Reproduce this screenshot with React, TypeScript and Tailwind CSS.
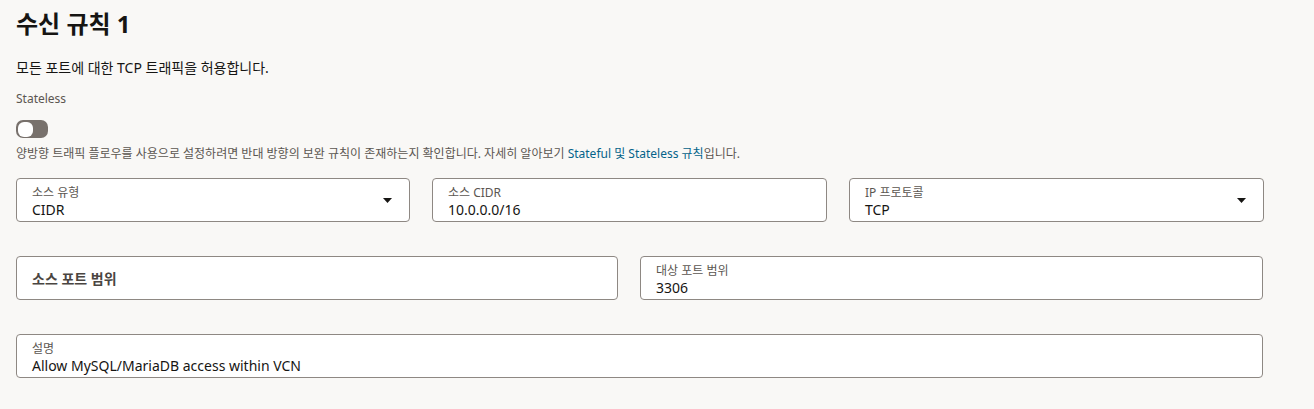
import React from "react";

const font = { fontFamily: '"Noto Sans", "Noto Sans CJK KR", sans-serif' };

function Caret() {
  return (
    <svg width="9" height="5" viewBox="0 0 9 5" className="shrink-0">
      <path d="M0 0h9L4.5 5z" fill="#161513" />
    </svg>
  );
}

function Field({ label, value, select }: { label: string; value: string; select?: boolean }) {
  return (
    <div className="flex h-[44px] items-start rounded-[4px] border border-[#8e8883] bg-white pl-[15px] pr-[17px]">
      <div className="flex min-w-0 flex-1 flex-col pt-[6px]">
        <span className="text-[12px] leading-[16px] text-[#5b5651]">{label}</span>
        <span className="text-[14px] leading-[18px] text-[#161513]">{value}</span>
      </div>
      {select && (
        <div className="flex h-full items-center">
          <Caret />
        </div>
      )}
    </div>
  );
}

export default function App() {
  return (
    <div className="min-h-screen bg-[#f9f8f6] px-4 pt-2 text-[#161513]" style={font}>
      {/* header */}
      <h1 className="text-[24px] font-bold leading-[32px]">수신 규칙 1</h1>
      <p className="mt-[18px] text-[14px] leading-[20px]">모든 포트에 대한 TCP 트래픽을 허용합니다.</p>

      <div className="mt-[13px] text-[12px] leading-[16px] text-[#5b5651]">Stateless</div>
      <div className="mt-[13px] flex h-[18px] w-[32px] items-center rounded-[7px] bg-[#78716c] px-[1.5px]">
        <div className="h-[15px] w-[15px] rounded-[6px] bg-white" />
      </div>
      <p className="mt-[8px] text-[12px] leading-[16px] text-[#5b5651]">
        양방향 트래픽 플로우를 사용으로 설정하려면 반대 방향의 보완 규칙이 존재하는지 확인합니다. 자세히 알아보기{" "}
        <span className="text-[#04638a]">Stateful 및 Stateless 규칙</span>입니다.
      </p>

      {/* row 1 */}
      <div className="mt-[16px] grid grid-cols-[394px_395px_415px] gap-[22px]">
        <Field label="소스 유형" value="CIDR" select />
        <Field label="소스 CIDR" value="10.0.0.0/16" />
        <Field label="IP 프로토콜" value="TCP" select />
      </div>

      {/* row 2 */}
      <div className="mt-[34px] grid grid-cols-[602px_623px] gap-[22px]">
        <div className="flex h-[44px] items-center rounded-[4px] border border-[#8e8883] bg-white pl-[15px]">
          <span className="text-[14px] font-semibold text-[#4a4541]">소스 포트 범위</span>
        </div>
        <Field label="대상 포트 범위" value="3306" />
      </div>

      {/* row 3 */}
      <div className="mt-[34px] w-[1247px]">
        <Field label="설명" value="Allow MySQL/MariaDB access within VCN" />
      </div>
    </div>
  );
}
